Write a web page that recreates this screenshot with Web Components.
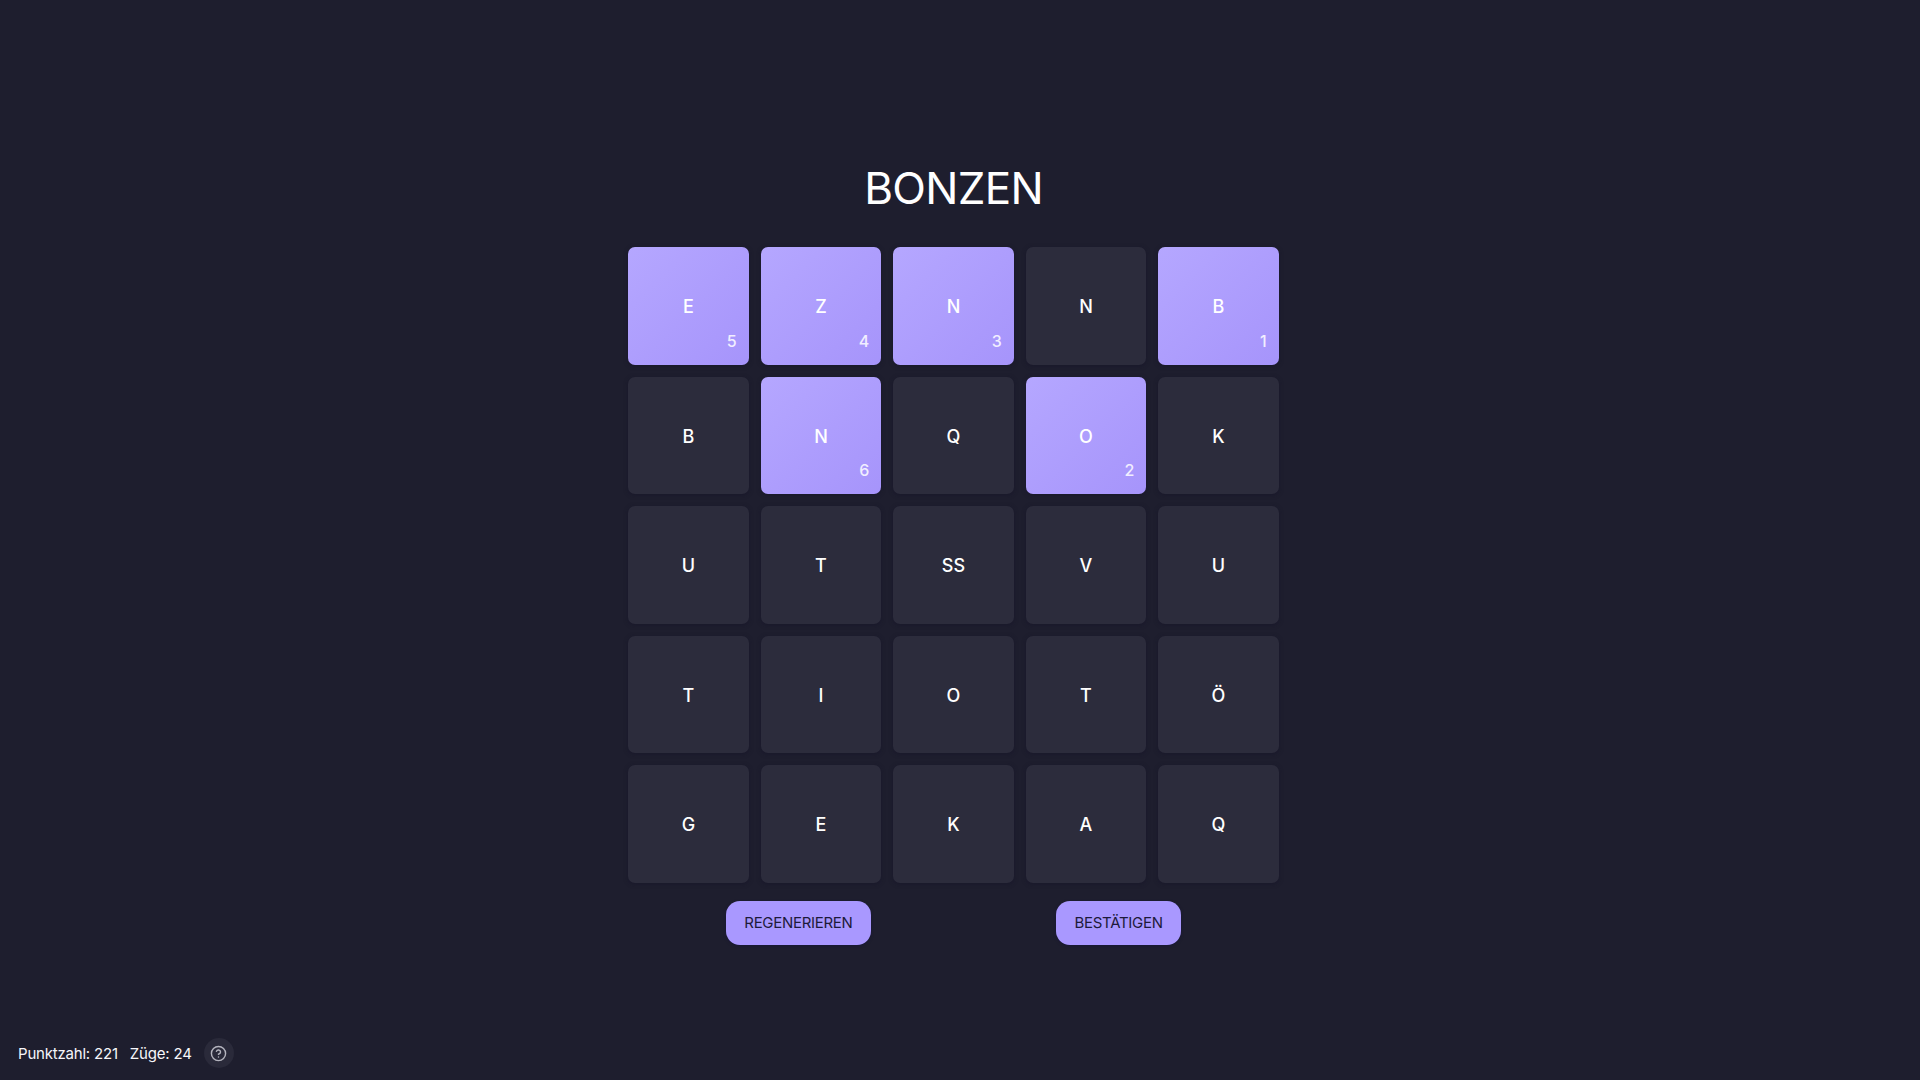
<!DOCTYPE html>
<html lang="de">
<head>
<meta charset="utf-8">
<title>Bonzen</title>
<style>
  html, body { margin: 0; height: 100%; background: #1e1e2e; }
  body { font-family: "Inter", "Liberation Sans", sans-serif; color: #fff; overflow: hidden; }
</style>
</head>
<body>
<word-game>
  <letter-tile slot="tile" order="5">E</letter-tile>
  <letter-tile slot="tile" order="4">Z</letter-tile>
  <letter-tile slot="tile" order="3">N</letter-tile>
  <letter-tile slot="tile">N</letter-tile>
  <letter-tile slot="tile" order="1">B</letter-tile>
  <letter-tile slot="tile">B</letter-tile>
  <letter-tile slot="tile" order="6">N</letter-tile>
  <letter-tile slot="tile">Q</letter-tile>
  <letter-tile slot="tile" order="2">O</letter-tile>
  <letter-tile slot="tile">K</letter-tile>
  <letter-tile slot="tile">U</letter-tile>
  <letter-tile slot="tile">T</letter-tile>
  <letter-tile slot="tile">SS</letter-tile>
  <letter-tile slot="tile">V</letter-tile>
  <letter-tile slot="tile">U</letter-tile>
  <letter-tile slot="tile">T</letter-tile>
  <letter-tile slot="tile">I</letter-tile>
  <letter-tile slot="tile">O</letter-tile>
  <letter-tile slot="tile">T</letter-tile>
  <letter-tile slot="tile">Ö</letter-tile>
  <letter-tile slot="tile">G</letter-tile>
  <letter-tile slot="tile">E</letter-tile>
  <letter-tile slot="tile">K</letter-tile>
  <letter-tile slot="tile">A</letter-tile>
  <letter-tile slot="tile">Q</letter-tile>
  <game-button slot="action">REGENERIEREN</game-button>
  <game-button slot="action">BESTÄTIGEN</game-button>
  <game-stats slot="footer" score="221" moves="24"></game-stats>
</word-game>
<script>
class WordGame extends HTMLElement {
  constructor() {
    super();
    const shadow = this.attachShadow({ mode: "open" });
    shadow.innerHTML = `
    <div class="main">
      <h1>BONZEN</h1>
      <div class="grid"><slot name="tile"></slot></div>
      <div class="actions"><slot name="action"></slot></div>
    </div>
    <div class="footer"><slot name="footer"></slot></div>
    <style>
      :host { display: flex; flex-direction: column; height: 1080px; }
      .main {
        flex: 1;
        display: flex;
        flex-direction: column;
        align-items: center;
        padding: 162px 13px 0 0;
      }
      h1 {
        margin: 0 0 32px;
        font-size: 44px;
        line-height: 53px;
        font-weight: 400;
        letter-spacing: -0.7px;
        color: #fff;
      }
      .grid {
        display: grid;
        grid-template-columns: repeat(5, 120.5px);
        grid-auto-rows: 117.6px;
        gap: 12px;
      }
      .actions {
        display: flex;
        justify-content: center;
        gap: 185px;
        margin-top: 18px;
      }
      .footer { padding: 0 0 12px 18px; }
    </style>`;
  }
}

class LetterTile extends HTMLElement {
  constructor() {
    super();
    const shadow = this.attachShadow({ mode: "open" });
    shadow.innerHTML = `
    <span class="letter"><slot></slot></span>
    <span class="order"></span>
    <style>
      :host {
        display: flex;
        align-items: center;
        justify-content: center;
        position: relative;
        border-radius: 7px;
        background: #2c2c3c;
        box-shadow: 0 1px 4px rgba(20, 18, 40, 0.5);
        color: #fff;
        font-size: 18px;
        font-weight: 450;
      }
      :host([order]) {
        background: linear-gradient(135deg, #b5a7ff, #a694fb);
      }
      .letter { padding-top: 1.5px; }
      .order {
        position: absolute;
        right: 12px;
        bottom: 15px;
        font-size: 16px;
        font-weight: 500;
        line-height: 18px;
        color: #f1eeff;
      }
    </style>`;
  }
  connectedCallback() {
    this.shadowRoot.querySelector(".order").textContent = this.getAttribute("order") || "";
  }
}

class GameButton extends HTMLElement {
  constructor() {
    super();
    const shadow = this.attachShadow({ mode: "open" });
    shadow.innerHTML = `
    <button><slot></slot></button>
    <style>
      :host { display: block; }
      button {
        height: 44px;
        padding: 0 18.5px;
        border: 0;
        border-radius: 14px;
        background: #a998ff;
        box-shadow: 0 1px 3px rgba(20, 18, 60, 0.6);
        color: #1d1a3a;
        font: 400 15px "Inter", "Liberation Sans", sans-serif;
        letter-spacing: -0.3px;
      }
    </style>`;
  }
}

class GameStats extends HTMLElement {
  constructor() {
    super();
    const shadow = this.attachShadow({ mode: "open" });
    shadow.innerHTML = `
    <span class="stat">Punktzahl: <span id="score"></span></span>
    <span class="stat">Züge: <span id="moves"></span></span>
    <div class="help">
      <svg width="17" height="17" viewBox="0 0 24 24" fill="none" stroke="currentColor" stroke-width="2" stroke-linecap="round" stroke-linejoin="round">
        <circle cx="12" cy="12" r="10"></circle>
        <path d="M9.09 9a3 3 0 0 1 5.83 1c0 2-3 3-3 3"></path>
        <path d="M12 17h.01"></path>
      </svg>
    </div>
    <style>
      :host {
        display: flex;
        align-items: center;
        gap: 12px;
        font-size: 15px;
        font-weight: 400;
        letter-spacing: -0.2px;
        color: #f6f6fa;
      }
      .help {
        display: flex;
        align-items: center;
        justify-content: center;
        width: 30px;
        height: 30px;
        border-radius: 50%;
        background: #2a2a3a;
        color: #b4b4be;
      }
    </style>`;
  }
  connectedCallback() {
    this.shadowRoot.querySelector("#score").textContent = this.getAttribute("score");
    this.shadowRoot.querySelector("#moves").textContent = this.getAttribute("moves");
  }
}

customElements.define("word-game", WordGame);
customElements.define("letter-tile", LetterTile);
customElements.define("game-button", GameButton);
customElements.define("game-stats", GameStats);
</script>
</body>
</html>
